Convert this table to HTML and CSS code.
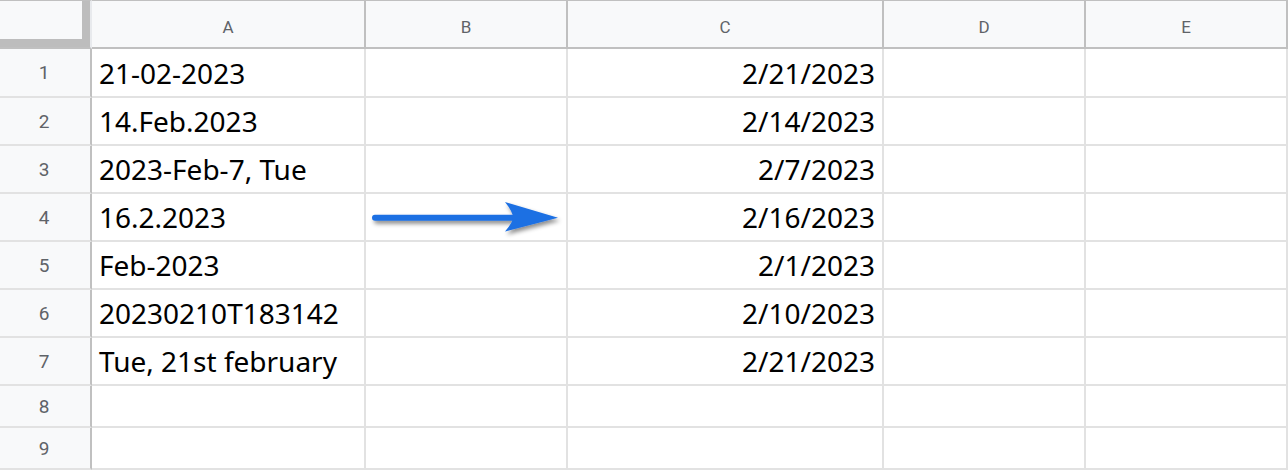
FILE: index.html
```html
<!DOCTYPE html>
<html>
<head>
<meta charset="utf-8">
<link rel="stylesheet" href="styles.css">
</head>
<body>
<div class="sheet">
  <div class="corner"><div class="corner-inner"></div></div>
  <div class="colhead">A</div>
  <div class="colhead">B</div>
  <div class="colhead">C</div>
  <div class="colhead">D</div>
  <div class="colhead">E</div>

  <div class="rowhead">1</div><div class="cell">21-02-2023</div><div class="cell"></div><div class="cell num">2/21/2023</div><div class="cell"></div><div class="cell"></div>
  <div class="rowhead">2</div><div class="cell">14.Feb.2023</div><div class="cell"></div><div class="cell num">2/14/2023</div><div class="cell"></div><div class="cell"></div>
  <div class="rowhead">3</div><div class="cell">2023-Feb-7, Tue</div><div class="cell"></div><div class="cell num">2/7/2023</div><div class="cell"></div><div class="cell"></div>
  <div class="rowhead">4</div><div class="cell">16.2.2023</div><div class="cell"></div><div class="cell num">2/16/2023</div><div class="cell"></div><div class="cell"></div>
  <div class="rowhead">5</div><div class="cell">Feb-2023</div><div class="cell"></div><div class="cell num">2/1/2023</div><div class="cell"></div><div class="cell"></div>
  <div class="rowhead">6</div><div class="cell">20230210T183142</div><div class="cell"></div><div class="cell num">2/10/2023</div><div class="cell"></div><div class="cell"></div>
  <div class="rowhead">7</div><div class="cell">Tue, 21st february</div><div class="cell"></div><div class="cell num">2/21/2023</div><div class="cell"></div><div class="cell"></div>
  <div class="rowhead">8</div><div class="cell"></div><div class="cell"></div><div class="cell"></div><div class="cell"></div><div class="cell"></div>
  <div class="rowhead">9</div><div class="cell"></div><div class="cell"></div><div class="cell"></div><div class="cell"></div><div class="cell"></div>

  <svg class="arrow" width="210" height="45" viewBox="0 0 210 45">
    <defs>
      <filter id="sh" x="-10%" y="-40%" width="130%" height="200%">
        <feDropShadow dx="2" dy="3" stdDeviation="2" flood-color="#000" flood-opacity="0.45"/>
      </filter>
    </defs>
    <g filter="url(#sh)">
      <line x1="15" y1="22.7" x2="152" y2="22.7" stroke="#1c6fe3" stroke-width="6" stroke-linecap="round"/>
      <path d="M145 7 L198 22.7 L145 36.5 Q153 27 153 22.7 Q153 17 145 7 Z" fill="#1c6fe3"/>
    </g>
  </svg>
</div>
</body>
</html>
```

FILE: styles.css
```css
html, body {
  margin: 0;
  padding: 0;
  background: #ffffff;
}

.sheet {
  position: relative;
  display: grid;
  grid-template-columns: 92px 274px 202px 316px 202px 202px;
  grid-template-rows: 49px 49px repeat(6, 48px) 42px 42px;
  width: 1288px;
  height: 470px;
  overflow: hidden;
}

.sheet > div {
  box-sizing: border-box;
}

.corner {
  background: #bdbdbd;
  border-bottom: 2px solid #c0c0c0;
  border-top: 1px solid #c0c0c0;
  border-right: 2px solid #e8eaed;
}

.corner-inner {
  width: 82px;
  height: 38px;
  background: #f8f9fa;
}

.colhead {
  background: #f8f9fa;
  border-top: 1px solid #c0c0c0;
  border-bottom: 2px solid #c0c0c0;
  border-right: 2px solid #c0c0c0;
  font-family: Roboto, "Liberation Sans", sans-serif;
  font-size: 17px;
  color: #5f6368;
  display: flex;
  align-items: center;
  justify-content: center;
  padding-top: 6px;
}

.rowhead {
  background: #f8f9fa;
  border-right: 2px solid #c0c0c0;
  border-bottom: 2px solid #e2e2e2;
  font-family: Roboto, "Liberation Sans", sans-serif;
  font-size: 19px;
  color: #5f6368;
  display: flex;
  align-items: center;
  justify-content: center;
  padding-right: 2px;
}

.cell {
  border-right: 2px solid #e2e2e2;
  border-bottom: 2px solid #e2e2e2;
  font-family: "Noto Sans", "Open Sans", sans-serif;
  font-size: 28px;
  color: #000;
  display: flex;
  align-items: center;
  padding-left: 7px;
  padding-right: 7px;
  white-space: nowrap;
  overflow: hidden;
}

.cell.num {
  justify-content: flex-end;
}

.arrow {
  position: absolute;
  left: 360px;
  top: 195px;
}
```
